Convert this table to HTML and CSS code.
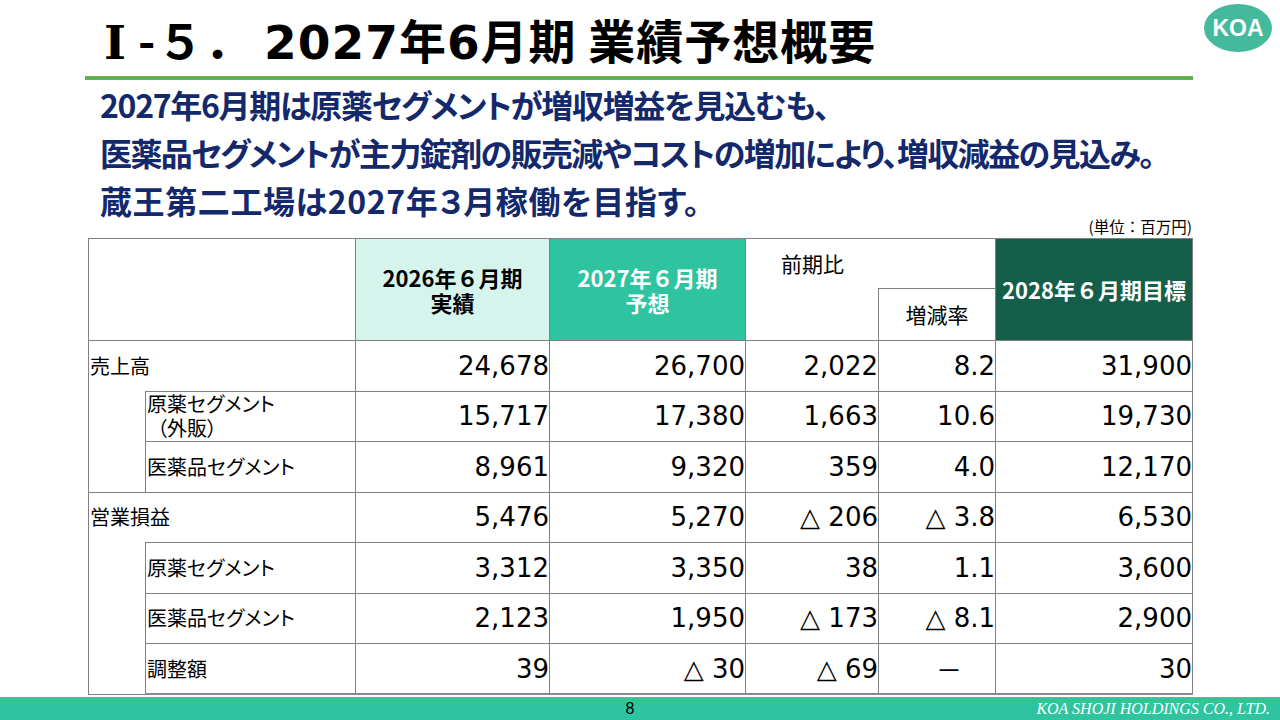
FILE: index.html
```html
<!DOCTYPE html>
<html lang="ja">
<head>
<meta charset="utf-8">
<title>業績予想概要</title>
<link rel="stylesheet" href="styles.css">
</head>
<body>
<div class="slide">
  <header class="top">
    <h1 class="title"><span class="roman">Ⅰ</span>-５． <span class="tnum">2027</span>年<span class="tnum">6</span>月期 業績予想概要</h1>
    <div class="logo">KOA</div>
  </header>
  <div class="rule"></div>
  <div class="lead">
    <p class="l1">2027年6月期は原薬セグメントが増収増益を見込むも、</p>
    <p class="l2">医薬品セグメントが主力錠剤の販売減やコストの増加により、増収減益の見込み。</p>
    <p class="l3">蔵王第二工場は2027年３月稼働を目指す。</p>
  </div>
  <div class="unit">(単位：百万円)</div>
  <table class="fin">
    <colgroup>
      <col class="c1"><col class="c2"><col class="c3"><col class="c4"><col class="c5"><col class="c6"><col class="c7">
    </colgroup>
    <thead>
      <tr class="hr1">
        <th class="blank" colspan="2" rowspan="2"></th>
        <th class="h26" rowspan="2">2026年６月期<br>実績</th>
        <th class="h27" rowspan="2">2027年６月期<br>予想</th>
        <th class="zenki">前期比</th>
        <th class="zenki-r"></th>
        <th class="h28" rowspan="2">2028年６月期目標</th>
      </tr>
      <tr class="hr2">
        <th class="zenki-b"></th>
        <th class="zougen">増減率</th>
      </tr>
    </thead>
    <tbody>
      <tr>
        <td class="lbl top-lbl" colspan="2">売上高</td>
        <td class="num">24,678</td>
        <td class="num">26,700</td>
        <td class="num">2,022</td>
        <td class="num">8.2</td>
        <td class="num">31,900</td>
      </tr>
      <tr>
        <td class="indent" rowspan="2"></td>
        <td class="lbl sub two">原薬セグメント<br><span class="paren">（外販）</span></td>
        <td class="num">15,717</td>
        <td class="num">17,380</td>
        <td class="num">1,663</td>
        <td class="num">10.6</td>
        <td class="num">19,730</td>
      </tr>
      <tr>
        <td class="lbl sub">医薬品セグメント</td>
        <td class="num">8,961</td>
        <td class="num">9,320</td>
        <td class="num">359</td>
        <td class="num">4.0</td>
        <td class="num">12,170</td>
      </tr>
      <tr>
        <td class="lbl top-lbl" colspan="2">営業損益</td>
        <td class="num">5,476</td>
        <td class="num">5,270</td>
        <td class="num">△ 206</td>
        <td class="num">△ 3.8</td>
        <td class="num">6,530</td>
      </tr>
      <tr>
        <td class="indent" rowspan="3"></td>
        <td class="lbl sub">原薬セグメント</td>
        <td class="num">3,312</td>
        <td class="num">3,350</td>
        <td class="num">38</td>
        <td class="num">1.1</td>
        <td class="num">3,600</td>
      </tr>
      <tr>
        <td class="lbl sub">医薬品セグメント</td>
        <td class="num">2,123</td>
        <td class="num">1,950</td>
        <td class="num">△ 173</td>
        <td class="num">△ 8.1</td>
        <td class="num">2,900</td>
      </tr>
      <tr>
        <td class="lbl sub">調整額</td>
        <td class="num">39</td>
        <td class="num">△ 30</td>
        <td class="num">△ 69</td>
        <td class="num dash">－</td>
        <td class="num">30</td>
      </tr>
    </tbody>
  </table>
  <footer class="foot">
    <span class="spacer"></span>
    <span class="page">8</span>
    <span class="company">KOA SHOJI HOLDINGS CO., LTD.</span>
  </footer>
</div>
</body>
</html>
```

FILE: styles.css
```css
* { box-sizing: border-box; }
html, body { margin: 0; padding: 0; }
body {
  width: 1280px;
  height: 720px;
  overflow: hidden;
  background: #ffffff;
  font-family: "Noto Sans CJK JP", "Noto Sans", sans-serif;
  color: #000000;
}
.slide {
  width: 1280px;
  height: 720px;
  display: flex;
  flex-direction: column;
}

/* header */
.top {
  height: 76px;
  display: flex;
  justify-content: space-between;
  align-items: flex-start;
}
.title {
  margin: 0;
  padding: 2px 0 0 104px;
  font-size: 47px;
  font-weight: 700;
  line-height: 74px;
  letter-spacing: 1px;
  white-space: nowrap;
  color: #000;
}
.roman {
  font-family: "DejaVu Serif", "Liberation Serif", serif;
  font-weight: 700;
  margin-right: 11px;
}
.tnum {
  font-family: "DejaVu Sans", sans-serif;
  font-weight: 700;
}
.logo {
  margin: 4px 8px 0 0;
  width: 68px;
  height: 48px;
  border-radius: 50%;
  background: #45b99c;
  color: #ffffff;
  font-family: "Liberation Sans", Arial, sans-serif;
  font-weight: 700;
  font-size: 23px;
  line-height: 48px;
  text-align: center;
}
.rule {
  margin-left: 85px;
  width: 1108px;
  height: 4px;
  background: #4cb45c;
  border-top: 1px solid #86a646;
  border-bottom: 1px solid #86a646;
}

/* lead */
.lead {
  padding-left: 100px;
  color: #13296b;
  font-size: 32px;
  font-weight: 700;
  line-height: 48px;
  font-feature-settings: "palt";
}
.lead p { margin: 0; white-space: nowrap; }
.l1 { letter-spacing: -1.3px; }
.l2 { letter-spacing: -1.6px; }
.l3 { letter-spacing: 0.6px; }

.unit {
  margin-top: -5px;
  width: 1192px;
  text-align: right;
  font-size: 15.5px;
  line-height: 14px;
  color: #000;
}

/* table */
.fin {
  margin: 5px 0 0 88px;
  width: 1104px;
  border-collapse: collapse;
  table-layout: fixed;
}
.c1 { width: 57px; }
.c2 { width: 210px; }
.c3 { width: 194px; }
.c4 { width: 196px; }
.c5 { width: 133px; }
.c6 { width: 117px; }
.c7 { width: 197px; }

.fin th, .fin td {
  border: 1px solid #808080;
  padding: 0;
}
.fin tbody tr:last-child td { border-bottom: 2px solid #8a8a8a; }
.hr1 { height: 50px; }
.hr2 { height: 52px; }
.fin tbody tr { height: 50.5px; }

.fin th {
  font-size: 22px;
  font-weight: 700;
  line-height: 25px;
  text-align: center;
  vertical-align: middle;
  white-space: nowrap;
}
.h26 { background: #d5f5ec; color: #000; }
.h27 { background: #2ec4a0; color: #ffffff; }
.h28 { background: #155e4a; color: #ffffff; }
.zenki {
  font-size: 21px !important;
  font-weight: 400 !important;
  text-align: left !important;
  padding-left: 35px !important;
  border-right: none !important;
  border-bottom: none !important;
}
.zenki-r { border-left: none !important; }
.zenki-b { border-top: none !important; }
.zougen { font-size: 21px !important; font-weight: 400 !important; }

.lbl {
  font-size: 20px;
  line-height: 24px;
  text-align: left;
  vertical-align: middle;
  font-feature-settings: "palt";
  padding-left: 1px !important;
  white-space: nowrap;
}
.top-lbl { border-bottom: none !important; }
.indent { border-top: none !important; }
.paren { padding-left: 10px; }

.num {
  font-family: "DejaVu Sans", Verdana, sans-serif;
  font-size: 26px;
  text-align: right;
  vertical-align: middle;
  white-space: nowrap;
}
.dash {
  font-family: "Noto Sans CJK JP", sans-serif;
  padding-right: 33px !important;
}

/* footer */
.foot {
  margin-top: auto;
  height: 23px;
  background: #2ec4a0;
  border-top: 1px solid #7fb84a;
  display: grid;
  grid-template-columns: 620px 20px 1fr;
  align-items: center;
}
.page {
  text-align: center;
  font-family: "Liberation Sans", Arial, sans-serif;
  font-size: 16px;
  color: #000;
}
.company {
  text-align: right;
  padding-right: 10px;
  font-family: "Liberation Serif", "Times New Roman", serif;
  font-style: italic;
  font-size: 16px;
  color: #ffffff;
}
```
